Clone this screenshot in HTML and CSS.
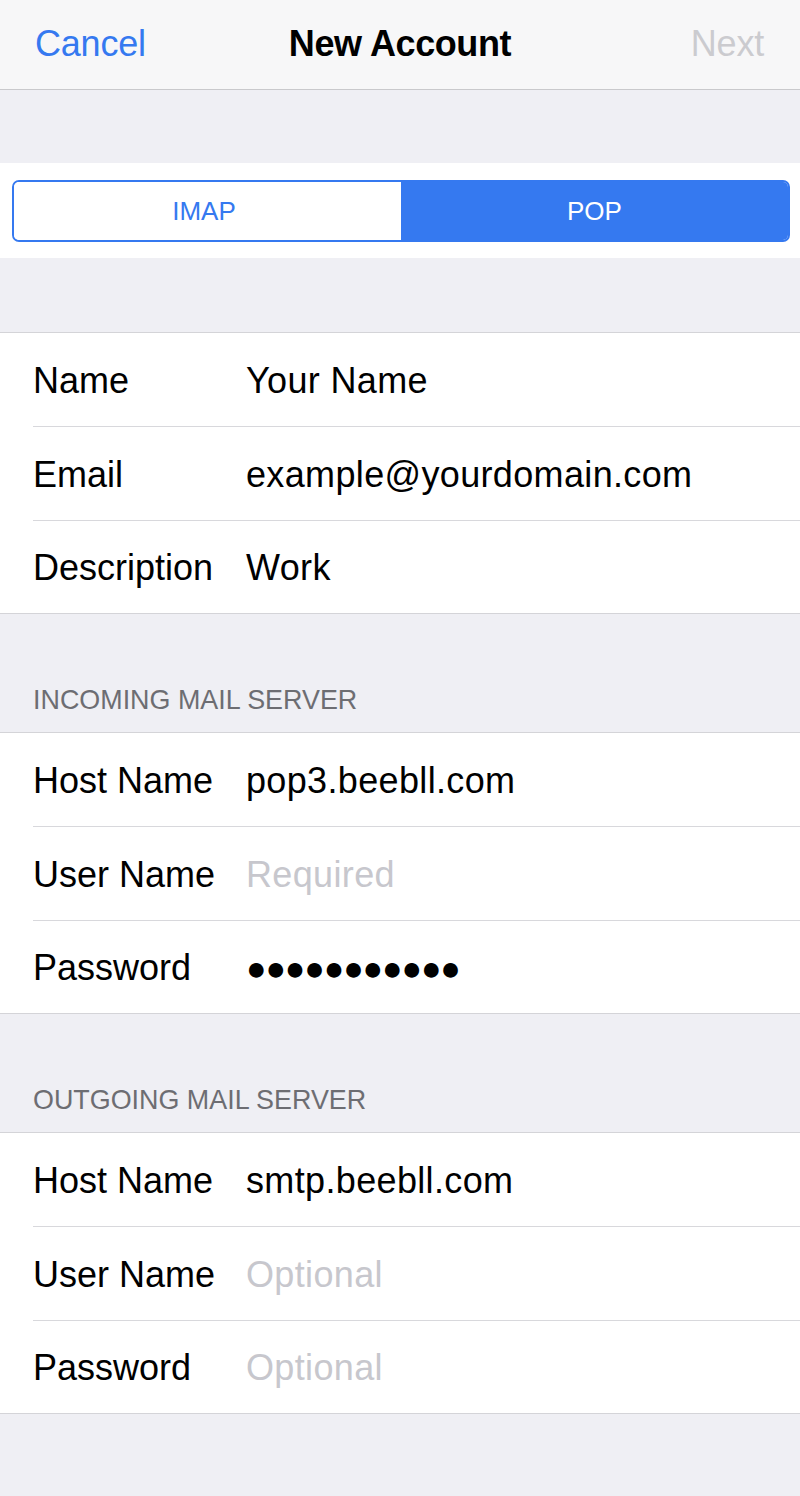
FILE: index.html
```html
<!DOCTYPE html>
<html lang="en">
<head>
<meta charset="utf-8">
<title>New Account</title>
<link rel="stylesheet" href="styles.css">
</head>
<body>
<div class="screen">
  <header class="nav">
    <span class="nav-btn cancel">Cancel</span>
    <span class="nav-title">New Account</span>
    <span class="nav-btn next">Next</span>
  </header>

  <div class="spacer top-space"></div>

  <div class="segment-band">
    <div class="segmented">
      <div class="seg first">IMAP</div>
      <div class="seg active">POP</div>
    </div>
  </div>

  <div class="spacer mid-space"></div>

  <section class="group">
    <div class="row"><span class="label">Name</span><span class="value">Your Name</span></div>
    <div class="row"><span class="label">Email</span><span class="value">example@yourdomain.com</span></div>
    <div class="row"><span class="label">Description</span><span class="value">Work</span></div>
  </section>

  <div class="section-header">INCOMING MAIL SERVER</div>
  <section class="group">
    <div class="row"><span class="label">Host Name</span><span class="value">pop3.beebll.com</span></div>
    <div class="row"><span class="label">User Name</span><span class="value placeholder">Required</span></div>
    <div class="row"><span class="label">Password</span><span class="value dots">●●●●●●●●●●●</span></div>
  </section>

  <div class="section-header">OUTGOING MAIL SERVER</div>
  <section class="group">
    <div class="row"><span class="label">Host Name</span><span class="value">smtp.beebll.com</span></div>
    <div class="row"><span class="label">User Name</span><span class="value placeholder">Optional</span></div>
    <div class="row"><span class="label">Password</span><span class="value placeholder">Optional</span></div>
  </section>
</div>
</body>
</html>
```

FILE: styles.css
```css
* { box-sizing: border-box; }

html, body {
  margin: 0;
  padding: 0;
  background: #efeff4;
}

body {
  font-family: "Liberation Sans", Arial, sans-serif;
  color: #000;
}

.screen {
  width: 800px;
  min-height: 1496px;
  background: #efeff4;
}

.nav {
  height: 90px;
  background: #f7f7f8;
  border-bottom: 1px solid #c9c9cc;
  display: flex;
  align-items: center;
  justify-content: space-between;
  padding: 0 36px 2px 35px;
  position: relative;
}

.nav-btn {
  font-size: 36px;
  letter-spacing: -0.2px;
}

.cancel { color: #3579f0; }
.next { color: #cbcbcf; }

.nav-title {
  position: absolute;
  left: 0;
  right: 0;
  text-align: center;
  font-size: 36px;
  font-weight: bold;
  letter-spacing: -0.4px;
  pointer-events: none;
}

.top-space { height: 73px; }
.mid-space { height: 75px; border-bottom: 1px solid #d4d4d8; }

.segment-band {
  background: #fff;
  height: 95px;
  padding: 17px 10px 16px 12px;
}

.segmented {
  height: 62px;
  border: 2px solid #3579f0;
  border-radius: 7px;
  display: flex;
  overflow: hidden;
}

.seg {
  flex: 0 0 50%;
  display: flex;
  align-items: center;
  justify-content: center;
  font-size: 26px;
  color: #3579f0;
  background: #fff;
}

.seg.first { padding-right: 7px; }

.seg.active {
  background: #3579f0;
  color: #fff;
}

.group {
  background: #fff;
  border-bottom: 1px solid #d4d4d8;
}

.row {
  height: 94px;
  margin-left: 33px;
  display: grid;
  grid-template-columns: 213px 1fr;
  align-items: center;
  border-bottom: 1px solid #d8d8dc;
  font-size: 36px;
  padding-top: 2px;
}

.row:last-child {
  border-bottom: none;
  height: 92px;
}

.value {
  white-space: nowrap;
  letter-spacing: 0.35px;
}

.placeholder { color: #c7c7cd; }

.dots {
  font-size: 34px;
  letter-spacing: -1.1px;
  padding-left: 0;
}

.section-header {
  height: 119px;
  padding: 0 0 16px 33px;
  display: flex;
  align-items: flex-end;
  font-size: 26.9px;
  color: #6d6d72;
  border-bottom: 1px solid #d4d4d8;
}
```
